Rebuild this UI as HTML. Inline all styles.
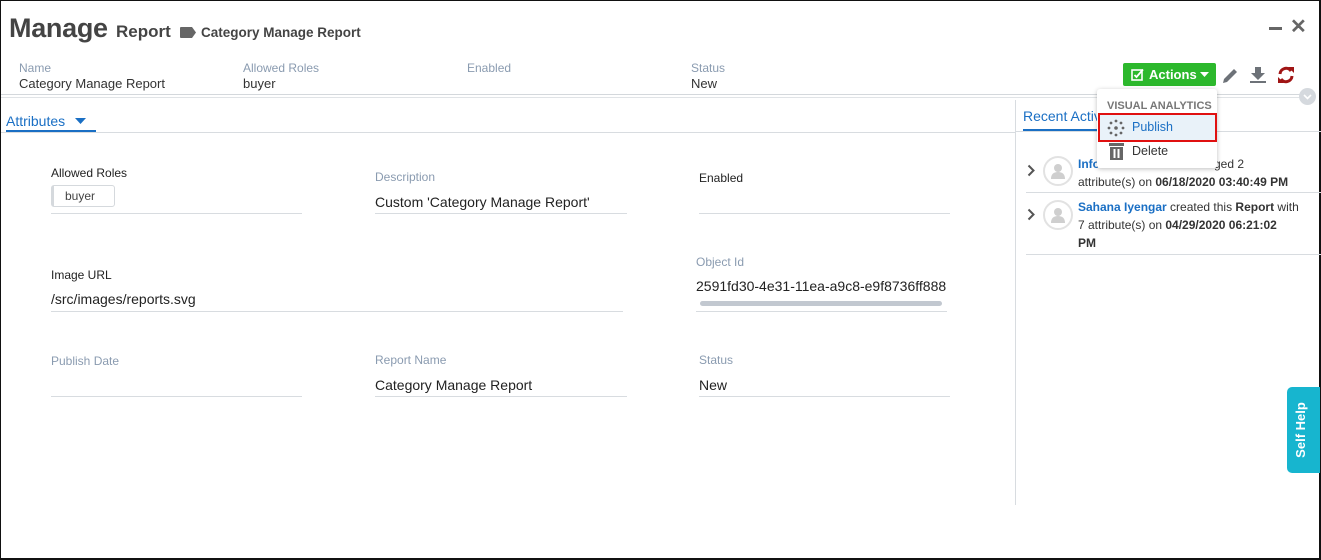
<!DOCTYPE html>
<html><head><meta charset="utf-8"><style>
*{margin:0;padding:0;box-sizing:border-box}
body{width:1321px;height:560px;overflow:hidden;background:#fff;font-family:"Liberation Sans",Arial,sans-serif;position:relative}
.a{position:absolute;white-space:nowrap}
.frame{position:absolute;left:0;top:0;width:1321px;height:560px;border:1px solid #111;border-bottom:2px solid #111;border-right:2px solid #111}
.lbl{font-size:12px;color:#8a9bb0;line-height:14px}
.val{font-size:13px;color:#333;line-height:16px}
.flbl{font-size:12px;line-height:14px}
.fval{font-size:14px;color:#222;line-height:16px}
.ul{position:absolute;height:1px;background:#d8dce0}
.b{font-weight:bold}
</style></head><body>
<div class="frame"></div>
<div class="a b" style="left:9px;top:12px;font-size:27px;letter-spacing:-0.3px;color:#444;line-height:32px">Manage</div>
<div class="a b" style="left:116px;top:22px;font-size:17px;color:#444;line-height:20px">Report</div>
<svg class="a" style="left:180px;top:27px" width="17" height="11"><path d="M0 1Q0 0 1 0H12L16 5.5L12 11H1Q0 11 0 10Z" fill="#666"/></svg>
<div class="a b" style="left:201px;top:25px;font-size:13.5px;color:#444;line-height:16px">Category Manage Report</div>

<div class="a lbl" style="left:19px;top:61px">Name</div>
<div class="a val" style="left:19px;top:76px">Category Manage Report</div>
<div class="a lbl" style="left:243px;top:61px">Allowed Roles</div>
<div class="a val" style="left:243px;top:76px">buyer</div>
<div class="a lbl" style="left:467px;top:61px">Enabled</div>
<div class="a lbl" style="left:691px;top:61px">Status</div>
<div class="a val" style="left:691px;top:76px">New</div>

<div class="a b" style="left:1269px;top:27px;width:13px;height:3px;background:#666"></div>
<div class="a b" style="left:1290px;top:17px;font-size:20px;color:#666;line-height:20px">✕</div>

<div class="a" style="left:1123px;top:63px;width:93px;height:23px;background:#2cb82c;border-radius:2px"></div>
<svg class="a" style="left:1131px;top:68px" width="13" height="13"><rect x="1" y="2" width="10" height="10" fill="none" stroke="#fff" stroke-width="1.6"/><path d="M3.5 7l2 2L12 1.5" fill="none" stroke="#fff" stroke-width="1.8"/></svg>
<div class="a b" style="left:1149px;top:67px;font-size:13px;color:#fff;line-height:15px">Actions</div>
<svg class="a" style="left:1200px;top:72px" width="9" height="5"><path d="M0 0H9L4.5 5Z" fill="#fff"/></svg>
<svg class="a" style="left:1222px;top:67px" width="17" height="17"><path d="M1 16l1-4L12 2l3 3L5 15Z" fill="#6d7278"/></svg>
<svg class="a" style="left:1250px;top:67px" width="16" height="17"><path d="M5 0h6v6h4l-7 7-7-7h4Z" fill="#6d7278"/><rect x="0" y="14" width="16" height="2" fill="#6d7278"/></svg>
<svg class="a" style="left:1277px;top:66px" width="18" height="18" viewBox="0 0 18 18"><path d="M3 8A6 6 0 0 1 14 5" fill="none" stroke="#a01515" stroke-width="3"/><path d="M11 1h6v6Z" fill="#a01515"/><path d="M15 10A6 6 0 0 1 4 13" fill="none" stroke="#a01515" stroke-width="3"/><path d="M7 17H1v-6Z" fill="#a01515"/></svg>

<div class="ul" style="left:1px;top:94px;width:1300px;background:#d4d8dc"></div>
<div class="ul" style="left:1px;top:97px;width:1300px;background:#e0e3e6"></div>
<div class="a" style="left:1299px;top:88px;width:17px;height:17px;border-radius:50%;background:#d5d9de"></div>
<svg class="a" style="left:1303px;top:94px" width="9" height="6"><path d="M1 1l3.5 3.5L8 1" fill="none" stroke="#fff" stroke-width="1.6"/></svg>

<div class="a" style="left:6px;top:113px;font-size:14px;color:#1a6fc4;line-height:16px">Attributes</div>
<svg class="a" style="left:75px;top:118px" width="11" height="6"><path d="M0 0H11L5.5 6Z" fill="#1a6fc4"/></svg>
<div class="a" style="left:6px;top:130px;width:90px;height:2px;background:#1a6fc4"></div>
<div class="ul" style="left:1px;top:132px;width:1014px"></div>
<div class="a" style="left:1015px;top:100px;width:1px;height:405px;background:#d8dce0"></div>

<div class="a" style="left:1023px;top:108px;font-size:14px;color:#1a6fc4;line-height:16px">Recent Activity</div>
<div class="a" style="left:1023px;top:129px;width:80px;height:2px;background:#1a6fc4"></div>
<div class="ul" style="left:1016px;top:131px;width:305px"></div>

<!-- activity -->
<svg class="a" style="left:1027px;top:164px" width="8" height="13"><path d="M1.5 1.5l5 5-5 5" fill="none" stroke="#555" stroke-width="2"/></svg>
<div class="a" style="left:1043px;top:156px;width:30px;height:30px;border-radius:50%;border:2px solid #e2e2e2"></div>
<svg class="a" style="left:1049px;top:162px" width="18" height="18"><circle cx="9" cy="6" r="4" fill="#cfcfcf"/><path d="M2 17Q2 10 9 10Q16 10 16 17Z" fill="#cfcfcf"/></svg>
<div class="a" style="left:1078px;top:155px;font-size:12px;line-height:18px;color:#333"><span class="b" style="color:#1a6fc4">Info</span><br>attribute(s) on <b>06/18/2020 03:40:49 PM</b></div>
<div class="a" style="left:1214px;top:155px;font-size:12px;line-height:18px;color:#333">ged 2</div>
<div class="ul" style="left:1026px;top:192px;width:295px"></div>
<svg class="a" style="left:1027px;top:208px" width="8" height="13"><path d="M1.5 1.5l5 5-5 5" fill="none" stroke="#555" stroke-width="2"/></svg>
<div class="a" style="left:1043px;top:200px;width:30px;height:30px;border-radius:50%;border:2px solid #e2e2e2"></div>
<svg class="a" style="left:1049px;top:206px" width="18" height="18"><circle cx="9" cy="6" r="4" fill="#cfcfcf"/><path d="M2 17Q2 10 9 10Q16 10 16 17Z" fill="#cfcfcf"/></svg>
<div class="a" style="left:1078px;top:198px;font-size:12px;line-height:18px;color:#333"><span class="b" style="color:#1a6fc4">Sahana Iyengar</span> created this <b>Report</b> with<br>7 attribute(s) on <b>04/29/2020 06:21:02</b><br><b>PM</b></div>
<div class="ul" style="left:1026px;top:254px;width:295px"></div>

<!-- dropdown -->
<div class="a" style="left:1097px;top:89px;width:120px;height:79px;background:#fff;box-shadow:0 1px 5px rgba(0,0,0,.25);border-radius:3px"></div>
<div class="a b" style="left:1107px;top:100px;font-size:11px;color:#777;line-height:12px">VISUAL ANALYTICS</div>
<div class="a" style="left:1098px;top:113px;width:119px;height:29px;background:#e9f2f9;border:2px solid #e01010"></div>
<svg class="a" style="left:1106px;top:118px" width="20" height="20"><g fill="#666"><circle cx="10" cy="3" r="1.4"/><circle cx="15" cy="5" r="1.4"/><circle cx="17" cy="10" r="1.4"/><circle cx="15" cy="15" r="1.4"/><circle cx="10" cy="17" r="1.4"/><circle cx="5" cy="15" r="1.4"/><circle cx="3" cy="10" r="1.4"/><circle cx="5" cy="5" r="1.4"/><circle cx="10" cy="10" r="1.8"/></g></svg>
<div class="a" style="left:1132px;top:120px;font-size:12.5px;color:#1a6fc4;line-height:14px">Publish</div>
<svg class="a" style="left:1109px;top:143px" width="15" height="17"><rect x="0" y="0" width="15" height="3" fill="#666"/><rect x="1" y="4" width="13" height="13" fill="#666"/><rect x="4.5" y="6" width="2" height="9" fill="#fff"/><rect x="8.5" y="6" width="2" height="9" fill="#fff"/></svg>
<div class="a" style="left:1132px;top:144px;font-size:12.5px;color:#333;line-height:14px">Delete</div>

<!-- form -->
<div class="a flbl" style="left:51px;top:166px;color:#222">Allowed Roles</div>
<div class="a" style="left:51px;top:185px;width:64px;height:22px;border:1px solid #d5d9dd;border-left:3px solid #d5d9dd;border-radius:3px;font-size:12px;color:#444;line-height:20px;padding-left:11px">buyer</div>
<div class="ul" style="left:51px;top:213px;width:251px"></div>
<div class="a flbl" style="left:375px;top:170px;color:#8a9bb0">Description</div>
<div class="a fval" style="left:375px;top:194px">Custom 'Category Manage Report'</div>
<div class="ul" style="left:375px;top:213px;width:252px"></div>
<div class="a flbl" style="left:699px;top:171px;color:#222">Enabled</div>
<div class="ul" style="left:699px;top:213px;width:251px"></div>

<div class="a flbl" style="left:51px;top:268px;color:#222">Image URL</div>
<div class="a fval" style="left:51px;top:291px">/src/images/reports.svg</div>
<div class="ul" style="left:51px;top:311px;width:572px"></div>
<div class="a flbl" style="left:696px;top:255px;color:#8a9bb0">Object Id</div>
<div class="a fval" style="left:696px;top:278px;width:251px;overflow:hidden">2591fd30-4e31-11ea-a9c8-e9f8736ff888</div>
<div class="a" style="left:700px;top:301px;width:242px;height:5px;border-radius:3px;background:#c2c8d0"></div>
<div class="ul" style="left:696px;top:311px;width:251px"></div>

<div class="a flbl" style="left:51px;top:354px;color:#8a9bb0">Publish Date</div>
<div class="ul" style="left:51px;top:396px;width:251px"></div>
<div class="a flbl" style="left:375px;top:353px;color:#8a9bb0">Report Name</div>
<div class="a fval" style="left:375px;top:377px">Category Manage Report</div>
<div class="ul" style="left:375px;top:396px;width:252px"></div>
<div class="a flbl" style="left:699px;top:353px;color:#8a9bb0">Status</div>
<div class="a fval" style="left:699px;top:377px">New</div>
<div class="ul" style="left:699px;top:396px;width:251px"></div>

<div class="a" style="left:1287px;top:387px;width:33px;height:86px;background:#17b5cf;border-radius:5px 0 0 5px"></div>
<div class="a b" style="left:1270px;top:422px;width:62px;font-size:13px;color:#fff;line-height:16px;transform:rotate(-90deg);text-align:center">Self Help</div>
</body></html>
